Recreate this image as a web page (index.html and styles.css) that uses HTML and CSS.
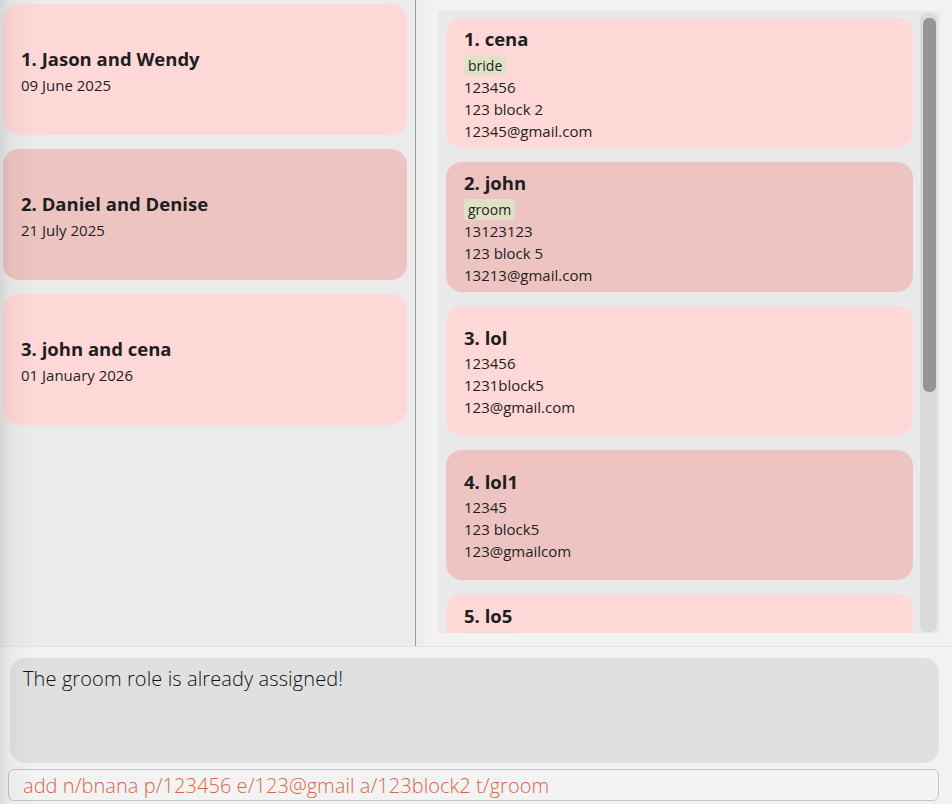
FILE: index.html
```html
<!DOCTYPE html>
<html>
<head>
<meta charset="utf-8">
<link rel="stylesheet" href="styles.css">
</head>
<body>
<div class="app">
  <div class="main">
    <div class="left">
      <div class="wcard odd">
        <div class="wtitle">1. Jason and Wendy</div>
        <div class="wdate">09 June 2025</div>
      </div>
      <div class="wcard even">
        <div class="wtitle">2. Daniel and Denise</div>
        <div class="wdate">21 July 2025</div>
      </div>
      <div class="wcard odd">
        <div class="wtitle">3. john and cena</div>
        <div class="wdate">01 January 2026</div>
      </div>
    </div>
    <div class="right">
      <div class="list">
        <div class="cards">
          <div class="pcard odd">
            <div class="ptitle">1. cena</div>
            <div class="tags"><span class="tag">bride</span></div>
            <div class="pline">123456</div>
            <div class="pline">123 block 2</div>
            <div class="pline">12345@gmail.com</div>
          </div>
          <div class="pcard even">
            <div class="ptitle">2. john</div>
            <div class="tags"><span class="tag">groom</span></div>
            <div class="pline">13123123</div>
            <div class="pline">123 block 5</div>
            <div class="pline">13213@gmail.com</div>
          </div>
          <div class="pcard odd">
            <div class="ptitle">3. lol</div>
            <div class="pline">123456</div>
            <div class="pline">1231block5</div>
            <div class="pline">123@gmail.com</div>
          </div>
          <div class="pcard even">
            <div class="ptitle">4. lol1</div>
            <div class="pline">12345</div>
            <div class="pline">123 block5</div>
            <div class="pline">123@gmailcom</div>
          </div>
          <div class="pcard odd partial">
            <div class="ptitle">5. lo5</div>
            <div class="tags"><span class="tag tag-peek"></span></div>
          </div>
        </div>
        <div class="scroll-track"><div class="scroll-thumb"></div></div>
      </div>
    </div>
  </div>
  <div class="bottom">
    <div class="result">The groom role is already assigned!</div>
    <div class="command">add n/bnana p/123456 e/123@gmail a/123block2 t/groom</div>
  </div>
  <div class="edge-shade"></div>
</div>
</body>
</html>
```
FILE: styles.css
```css
html, body {
  margin: 0;
  padding: 0;
}
body {
  width: 952px;
  height: 804px;
  overflow: hidden;
  background: #f2f2f2;
  font-family: "Open Sans", "Noto Sans", sans-serif;
  color: #1e1e1e;
}
.app {
  position: relative;
  display: flex;
  flex-direction: column;
  height: 804px;
}
.main {
  display: flex;
  height: 646px;
  border-bottom: 1px solid #e2e2e2;
}
.left {
  flex: none;
  width: 404px;
  padding: 4px 8px 0 3px;
  background: #ebebeb;
  border-right: 1px solid #9c9c9c;
  display: flex;
  flex-direction: column;
  gap: 14px;
}
.wcard {
  height: 131px;
  border-radius: 16px;
  padding: 4px 18px 0;
  display: flex;
  flex-direction: column;
  justify-content: center;
  box-sizing: border-box;
}
.odd { background: #ffd8d7; }
.even { background: #edc4c2; }
.wtitle {
  font-size: 18.5px;
  font-weight: 700;
  line-height: 26px;
}
.wdate {
  font-size: 15px;
  line-height: 26px;
}
.right {
  flex: 1;
  padding: 11px 12px 13px 13px;
  display: flex;
  border-left: 9px solid #ededed;
}
.list {
  flex: 1;
  background: #e9e9e9;
  display: flex;
  overflow: hidden;
  padding: 7px 3px 0 8px;
}
.cards {
  width: 467px;
  flex: none;
  display: flex;
  flex-direction: column;
  gap: 14px;
}
.pcard {
  height: 130px;
  flex: none;
  border-radius: 16px;
  padding: 0 18px;
  display: flex;
  flex-direction: column;
  justify-content: center;
  box-sizing: border-box;
}
.pcard.partial {
  justify-content: flex-start;
  padding-top: 8px;
}
.ptitle {
  font-size: 18.5px;
  font-weight: 700;
  line-height: 28px;
}
.tags {
  display: flex;
  margin: 2px 0 0;
}
.tag {
  background: #e1e1c6;
  font-size: 14px;
  line-height: 21px;
  padding: 0 4px;
  border-radius: 2px;
}
.tag-peek {
  width: 44px;
  height: 21px;
}
.pline {
  font-size: 15px;
  line-height: 22px;
}
.scroll-track {
  flex: none;
  width: 17px;
  margin: -5px 0 1px 7px;
  background: #dadada;
  border-radius: 7px;
  padding: 5px 1px 0 3px;
  box-sizing: border-box;
}
.scroll-thumb {
  height: 374px;
  background: #959595;
  border-radius: 6px;
}
.bottom {
  flex: 1;
  padding: 11px 13px 0 0;
  display: flex;
  flex-direction: column;
}
.result {
  margin-left: 10px;
  height: 105px;
  background: #e0e0e0;
  border-radius: 15px;
  padding: 8px 13px;
  box-sizing: border-box;
  font-size: 20px;
  font-weight: 300;
  line-height: 26px;
  color: #111;
  letter-spacing: 0.1px;
}
.command {
  margin: 6px 0 0 8px;
  height: 32px;
  border: 1px solid #c6c6c6;
  border-radius: 6px;
  background: #f3f3f3;
  box-sizing: border-box;
  padding: 0 14px;
  font-size: 20px;
  font-weight: 300;
  line-height: 31px;
  color: #d8674a;
  letter-spacing: 0.05px;
}
.edge-shade {
  position: absolute;
  left: 0;
  top: 0;
  bottom: 0;
  width: 36px;
  pointer-events: none;
  background: linear-gradient(to right, rgba(0,0,0,0.09), rgba(0,0,0,0.03) 30%, rgba(0,0,0,0));
}
```
